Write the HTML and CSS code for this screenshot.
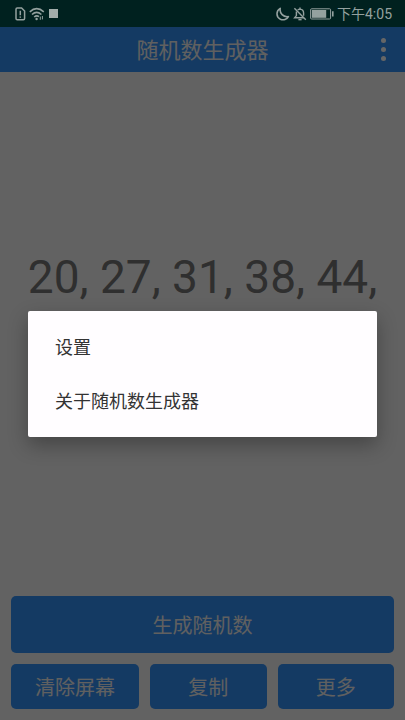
FILE: index.html
```html
<!DOCTYPE html>
<html lang="zh-CN">
<head>
    <meta charset="UTF-8">
    <meta name="viewport" content="width=device-width, initial-scale=1.0">
    <title>随机数生成器</title>
    <link rel="stylesheet" href="styles.css">
</head>
<body>
    <div class="status-bar">
        <div class="status-left">
            <svg class="icon-sim" width="11" height="14" viewBox="0 0 11 14" fill="none" stroke="currentColor">
                <path d="M1 2.2Q1 1 2.2 1H6.6L9.6 4V11.6Q9.6 12.8 8.4 12.8H2.2Q1 12.8 1 11.6Z" stroke-width="1.5"/>
                <path d="M5.3 3.8V8.2M5.3 9.4V10.8" stroke-width="1.5"/>
            </svg>
            <svg class="icon-wifi" width="16" height="14" viewBox="0 0 16 14" fill="none" stroke="currentColor" stroke-width="1.6">
                <path d="M0.8 4.8Q7.6 -1.4 14.8 4.8M3 7.5Q7.6 3.4 12.4 7.5M5.2 10Q7.6 8 10 9.6"/>
                <circle cx="7.6" cy="12" r="1.2" fill="currentColor" stroke="none"/>
                <path d="M11.3 12.8V9.6M13.4 9V12.4" stroke-width="1"/>
            </svg>
            <span class="icon-square"></span>
        </div>
        <div class="status-right">
            <svg class="icon-moon" width="14" height="14" viewBox="0 0 14 14" fill="none" stroke="currentColor" stroke-width="1.6" stroke-linejoin="round">
                <path d="M4.2 1.4C-0.2 4 0 10 4.4 12.2C7.4 13.6 11 12.4 12.4 9.6C7.4 10.4 3.4 6.4 4.2 1.4Z"/>
            </svg>
            <svg class="icon-bell" width="14" height="14" viewBox="0 0 14 14" fill="none" stroke="currentColor" stroke-width="1.4">
                <path d="M3.4 4.6V8.6L1.6 10.8H10.8M4.7 3Q5.6 2.1 7 2.1Q10.6 2.4 10.6 6V8.8M7 2.1V0.6"/>
                <path d="M5.4 12.6H8.6" stroke-width="1.5"/>
                <path d="M1.4 1.2L12.8 12.8"/>
            </svg>
            <svg class="icon-battery" width="24" height="12" viewBox="0 0 24 12" fill="none" stroke="currentColor">
                <rect x="0.6" y="0.8" width="20" height="10.2" rx="1"/>
                <rect x="1.8" y="2" width="14.4" height="7.8" fill="currentColor" stroke="none"/>
                <path d="M22.8 3.2V8.6" stroke-width="1.6"/>
            </svg>
            <span class="clock">下午4:05</span>
        </div>
    </div>

    <div class="app">
        <header class="app-bar">
            <h1>随机数生成器</h1>
            <button type="button" class="overflow-btn" aria-label="更多选项">
                <span></span><span></span><span></span>
            </button>
        </header>

        <main class="result">20, 27, 31, 38, 44,</main>

        <div class="actions">
            <button type="button" class="btn btn-main">生成随机数</button>
            <div class="btn-row">
                <button type="button" class="btn btn-wide">清除屏幕</button>
                <button type="button" class="btn">复制</button>
                <button type="button" class="btn">更多</button>
            </div>
        </div>

        <!-- Options dialog -->
        <div class="scrim">
            <div class="dialog" role="dialog" aria-modal="true">
                <button type="button" class="dialog-item">设置</button>
                <button type="button" class="dialog-item">关于随机数生成器</button>
            </div>
        </div>
    </div>
</body>
</html>
```
FILE: styles.css
```css
* {
    box-sizing: border-box;
}

body {
    display: flex;
    flex-direction: column;
    min-height: 100vh;
    margin: 0;
    font-family: Roboto, "Noto Sans CJK SC", sans-serif;
    background-color: #f5f5f5;
}

button {
    border: none;
    font-family: inherit;
    cursor: pointer;
}

/* Status bar */
.status-bar {
    display: flex;
    align-items: center;
    justify-content: space-between;
    height: 27px;
    padding: 0 13px 0 15px;
    background-color: #00211f;
    color: #94a19f;
}

.status-left,
.status-right {
    display: flex;
    align-items: center;
    gap: 3px;
}

.icon-square {
    width: 9px;
    height: 9px;
    margin-left: 1px;
    background-color: #a3adab;
}

.clock {
    font-size: 14px;
    line-height: 20px;
}

/* App */
.app {
    position: relative;
    display: flex;
    flex: 1;
    flex-direction: column;
}

.app-bar {
    display: grid;
    grid-template-columns: 44px 1fr 44px;
    align-items: center;
    height: 45px;
    background-color: #3491f7;
}

.app-bar h1 {
    grid-column: 2;
    margin: 0;
    padding-top: 2px;
    color: #f0f0f0;
    font-size: 22px;
    font-weight: 400;
    line-height: 32px;
    text-align: center;
}

.overflow-btn {
    display: flex;
    flex-direction: column;
    align-items: center;
    gap: 4px;
    padding: 8px 0;
    background: none;
}

.overflow-btn span {
    width: 5px;
    height: 5px;
    border-radius: 50%;
    background-color: #fff;
}

.result {
    flex: 1;
    padding: 178px 16px 0;
    color: #757575;
    font-size: 46px;
    line-height: 54px;
    text-align: center;
}

.actions {
    display: flex;
    flex-direction: column;
    gap: 11px;
    padding: 11px;
}

.btn-row {
    display: flex;
    gap: 11px;
}

.btn {
    flex: 10 1 0;
    height: 45px;
    padding: 2px 0 0;
    border-radius: 5px;
    background-color: #3491f7;
    color: #f0f0f0;
    font-size: 20px;
    line-height: 28px;
}

.btn-wide {
    flex-grow: 11;
}

.btn-main {
    flex: none;
    height: 57px;
}

/* Dialog */
.scrim {
    position: absolute;
    inset: 0;
    display: flex;
    align-items: center;
    justify-content: center;
    padding: 0 28px;
    background-color: rgba(0, 0, 0, 0.6);
}

.dialog {
    width: 100%;
    padding: 9px 0;
    border-radius: 2px;
    background-color: #fffdff;
    box-shadow: 0 8px 20px rgba(0, 0, 0, 0.3);
}

.dialog-item {
    display: block;
    width: 100%;
    height: 54px;
    padding: 2px 27px 0;
    background: none;
    color: #333;
    font-size: 18px;
    line-height: 26px;
    text-align: left;
}
```
